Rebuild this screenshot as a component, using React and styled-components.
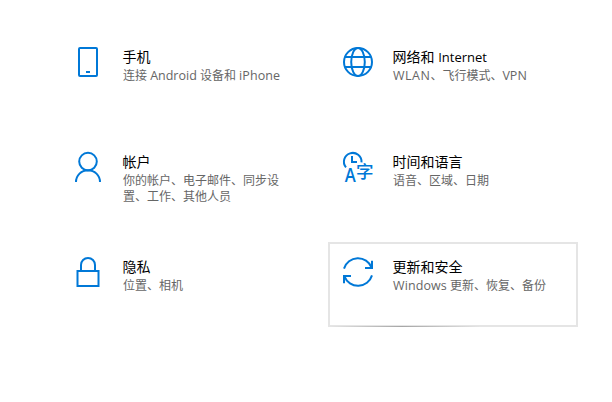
import React from "react";
import styled, { createGlobalStyle } from "styled-components";

const PhoneIcon = () => (
  <Icon viewBox="0 0 30 30">
    <rect x="6" y="1" width="18" height="28" rx="1" />
    <path d="M13 25h4" />
  </Icon>
);

const GlobeIcon = () => (
  <Icon viewBox="0 0 30 30">
    <circle cx="15" cy="15" r="14" />
    <ellipse cx="15" cy="15" rx="6.8" ry="14" />
    <path d="M2 10h26M2 20h26" />
  </Icon>
);

const PersonIcon = () => (
  <Icon viewBox="0 0 30 30">
    <circle cx="15" cy="9.6" r="8.8" />
    <path d="M3 30a12 11.8 0 0 1 24 0" />
  </Icon>
);

const LanguageIcon = () => (
  <Icon viewBox="0 0 30 30">
    <path d="M3 15.4A8.8 8.8 0 1 1 18.5 10.4" />
    <path d="M9 4v6h5" />
    <IconLetter x="1.8" y="29.7" $size={19} textLength="11" lengthAdjust="spacingAndGlyphs">
      A
    </IconLetter>
    <IconLetter x="13" y="25.8" $size={17.5} $weight={500}>字</IconLetter>
  </Icon>
);

const LockIcon = () => (
  <Icon viewBox="0 0 30 30">
    <rect x="4.5" y="14" width="21" height="15" />
    <path d="M8 14V8a7 7 0 0 1 14 0v6" />
  </Icon>
);

const UpdateIcon = () => (
  <Icon viewBox="0 0 30 30">
    <path d="M1 11.6A14.6 14.6 0 0 1 28.6 10.6" />
    <path d="M29 3.8V11H22" />
    <path d="M29 18.4A14.6 14.6 0 0 1 1.4 19.4" />
    <path d="M1 26.2V19H8" />
  </Icon>
);

const Latin = styled.span`
  font-size: ${(props) => props.$size || 12.5}px;
  letter-spacing: ${(props) => props.$spacing || 0}px;
`;

const categories = [
  {
    id: "phone",
    icon: <PhoneIcon />,
    title: "手机",
    text: (
      <>
        连接 <Latin>Android</Latin> 设备和 <Latin $spacing={0.1}>iPhone</Latin>
      </>
    ),
  },
  {
    id: "network",
    icon: <GlobeIcon />,
    title: (
      <>
        网络和 <Latin $size={13}>Internet</Latin>
      </>
    ),
    text: (
      <>
        <Latin $spacing={0.5}>WLAN</Latin>、飞行模式、
        <Latin>VPN</Latin>
      </>
    ),
  },
  {
    id: "accounts",
    icon: <PersonIcon />,
    title: "帐户",
    text: "你的帐户、电子邮件、同步设置、工作、其他人员",
  },
  {
    id: "language",
    icon: <LanguageIcon />,
    title: "时间和语言",
    text: "语音、区域、日期",
  },
  {
    id: "privacy",
    icon: <LockIcon />,
    title: "隐私",
    text: "位置、相机",
  },
  {
    id: "update",
    icon: <UpdateIcon />,
    title: "更新和安全",
    text: (
      <>
        <Latin $spacing={0.1}>Windows</Latin> 更新、恢复、备份
      </>
    ),
    active: true,
  },
];

const App = () => {
  return (
    <>
      <GlobalStyle />
      <SettingsGrid>
        {categories.map((item) => (
          <Category key={item.id} $active={item.active}>
            {item.icon}
            <CategoryInfo>
              <CategoryTitle>{item.title}</CategoryTitle>
              <CategoryText>{item.text}</CategoryText>
            </CategoryInfo>
            {item.active && <Reveal />}
          </Category>
        ))}
      </SettingsGrid>
    </>
  );
};

export default App;

const GlobalStyle = createGlobalStyle`
  * {
    box-sizing: border-box;
  }
  body {
    margin: 0;
    background-color: #fff;
    font-family: "Open Sans", "Noto Sans CJK SC", sans-serif;
  }
`;
const SettingsGrid = styled.main`
  display: grid;
  grid-template-columns: 250px 250px;
  grid-auto-rows: 85px;
  gap: 20px;
  height: 402px;
  padding: 32px 0 0 58px;
`;
const Category = styled.section`
  position: relative;
  display: flex;
  align-items: flex-start;
  padding: 13px;
  border: 2px solid ${(props) => (props.$active ? "#e5e5e5" : "transparent")};
`;
/* pointer light on the lower border */
const Reveal = styled.span`
  position: absolute;
  left: 0;
  bottom: -2px;
  width: 150px;
  height: 1px;
  background: linear-gradient(90deg, #e5e5e5, #a6a6a6 48%, #e5e5e5);
`;
const Icon = styled.svg`
  flex: none;
  width: 30px;
  height: 30px;
  overflow: visible;
  fill: none;
  stroke: #0078d7;
  stroke-width: 2;
`;
const IconLetter = styled.text`
  fill: #0078d7;
  stroke: none;
  font-size: ${(props) => props.$size}px;
  font-weight: ${(props) => props.$weight || 600};
`;
const CategoryInfo = styled.div`
  width: 164px;
  margin-left: 20px;
`;
const CategoryTitle = styled.h2`
  margin: 0 0 1px -0.5px;
  font-size: 14px;
  font-weight: 400;
  line-height: 20px;
  color: #000;
`;
const CategoryText = styled.p`
  margin: 0;
  font-size: 12px;
  line-height: 16px;
  color: #666;
`;
